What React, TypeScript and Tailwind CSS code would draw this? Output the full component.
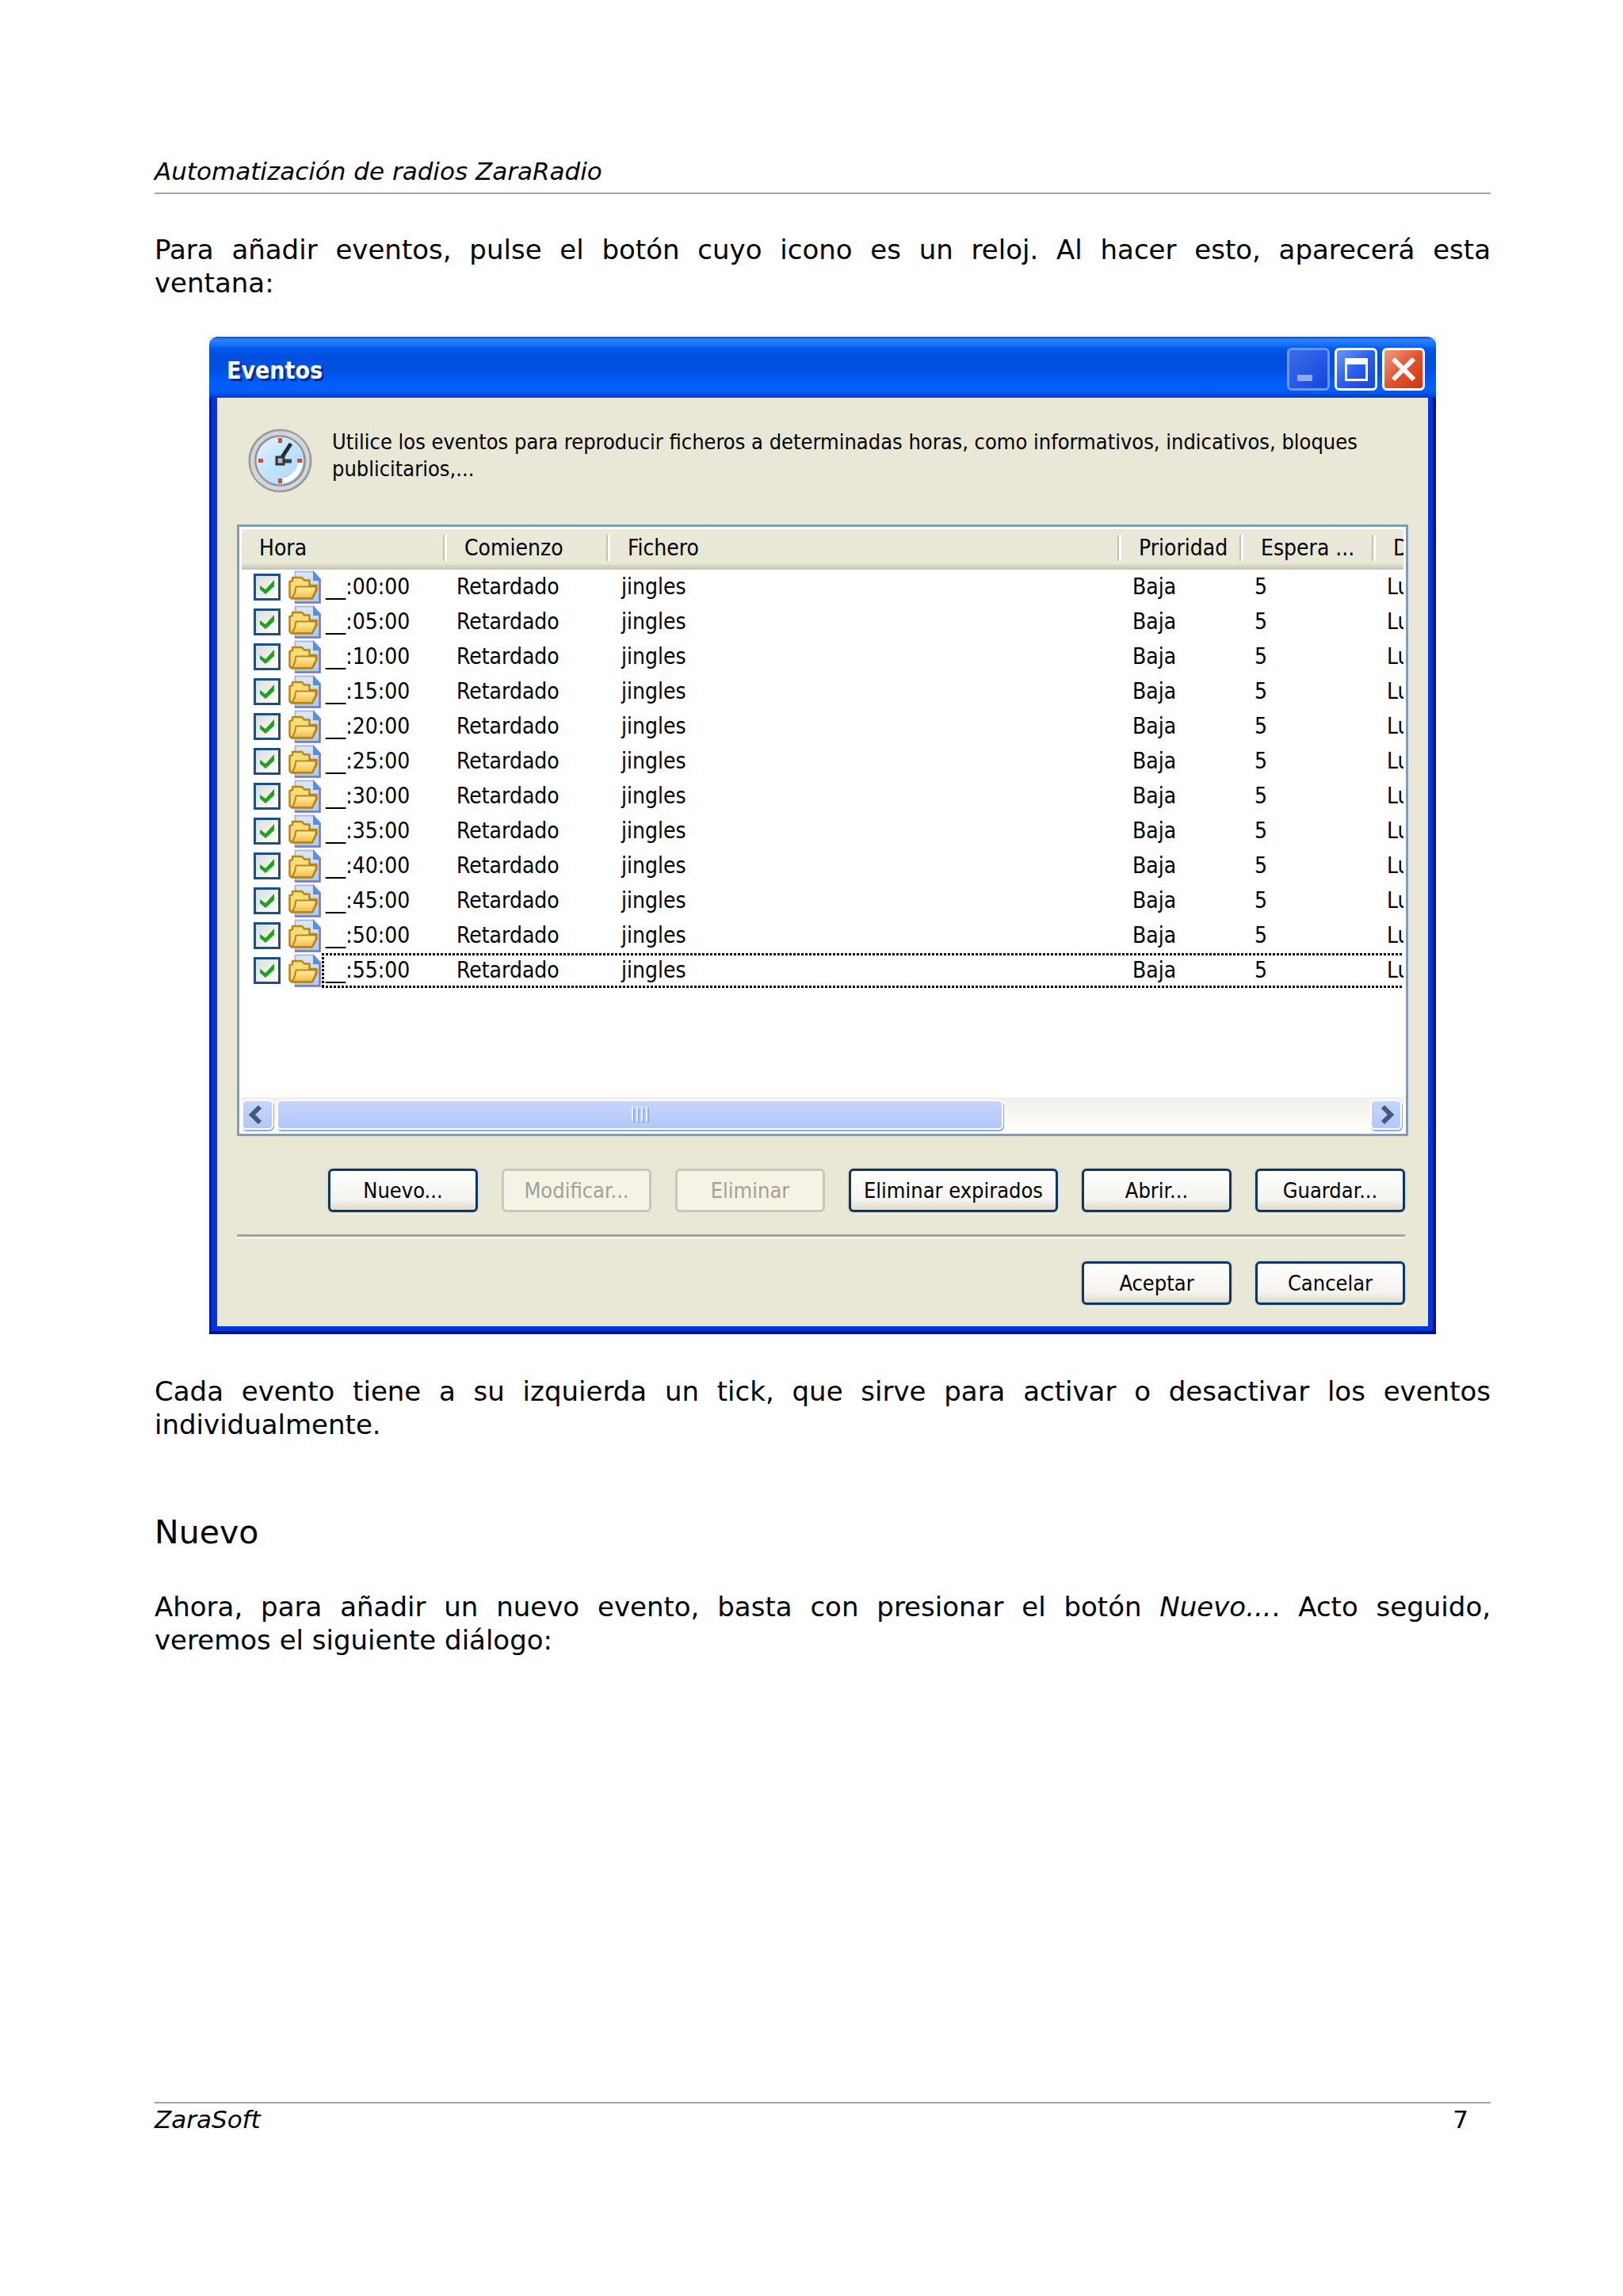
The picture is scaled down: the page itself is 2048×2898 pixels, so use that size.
import type { ReactNode } from 'react';

const events = ['00', '05', '10', '15', '20', '25', '30', '35', '40', '45', '50', '55'];

const ClockIcon = () => (
  <svg viewBox="0 0 81 81" className="h-[81px] w-[81px] shrink-0" aria-hidden="true">
    <defs>
      <linearGradient id="rim" x1="0" y1="0" x2="1" y2="1">
        <stop offset="0" stopColor="#8f8f92" />
        <stop offset="0.45" stopColor="#d9d9dc" />
        <stop offset="1" stopColor="#8c8c8e" />
      </linearGradient>
      <linearGradient id="face" x1="0" y1="0" x2="1" y2="1">
        <stop offset="0" stopColor="#e9f5fe" />
        <stop offset="0.5" stopColor="#bfe2fb" />
        <stop offset="1" stopColor="#a9d8fa" />
      </linearGradient>
    </defs>
    <circle cx="40.5" cy="40.5" r="39" fill="url(#rim)" stroke="#98979a" strokeWidth="2" />
    <circle cx="40.5" cy="40.5" r="35" fill="none" stroke="#d6d5d9" strokeWidth="4" />
    <circle cx="40.5" cy="40.5" r="31" fill="url(#face)" stroke="#8d8d92" strokeWidth="2" />
    <path d="M66 42A26 26 0 0 1 42 66" fill="none" stroke="#fff" strokeWidth="6" strokeLinecap="round" />
    <path d="M38 12h5v6h-5zM38 63h5v6h-5zM13 38h6v5h-6zM62 38h6v5h-6z" fill="#f0401c" />
    <path d="M41 39L54 19" stroke="#262b30" strokeWidth="5" />
    <path d="M42 41h13" stroke="#3b4046" strokeWidth="5" />
    <rect x="36" y="36" width="9" height="9" fill="#b5babd" stroke="#30353a" strokeWidth="3" />
  </svg>
);

const FolderIcon = () => (
  <svg viewBox="0 0 41 42" className="h-[42px] w-[41px] shrink-0" aria-hidden="true">
    <defs>
      <linearGradient id="sheet" x1="0" y1="0" x2="0" y2="1">
        <stop offset="0" stopColor="#dfe8fb" />
        <stop offset="1" stopColor="#9dcdf3" />
      </linearGradient>
      <linearGradient id="front" x1="0" y1="0" x2="0" y2="1">
        <stop offset="0" stopColor="#fff0a6" />
        <stop offset="1" stopColor="#f1bd45" />
      </linearGradient>
    </defs>
    <path d="M8.5 1.5H31L39.5 11V40.5H8.5Z" fill="url(#sheet)" stroke="#a9b8e6" strokeWidth="2" />
    <path d="M8 40.5H39.5V12" fill="none" stroke="#7b78bd" strokeWidth="2.5" />
    <path d="M31 0L41 11V13H31Z" fill="#5b8fdc" />
    <path d="M1.500 33V14L5 13V9H17L20 12.500H26.500V19H35.500V25L30 35.500H4Z" fill="#f8dc78" stroke="#b9851a" strokeWidth="2.5" strokeLinejoin="round" />
    <path d="M9.500 20.500H34.500V25L30 35H4.500L8 28Z" fill="url(#front)" stroke="#b9851a" strokeWidth="2" strokeLinejoin="round" />
  </svg>
);

const CheckBox = ({ label }: { label: string }) => (
  <span className="grid h-[34px] w-[34px] shrink-0">
    <input
      type="checkbox"
      defaultChecked
      aria-label={label}
      className="peer col-start-1 row-start-1 h-full w-full appearance-none border-3 border-[#1c5180] bg-linear-to-br from-[#dcdcd7] to-white"
    />
    <svg viewBox="0 0 34 34" className="pointer-events-none invisible col-start-1 row-start-1 peer-checked:visible" aria-hidden="true">
      <path d="M8 15l7 5L26 8v8L15 26 8 20z" fill="#21a121" />
    </svg>
  </span>
);

const captionButton = 'flex h-[54px] w-[54px] items-center justify-center rounded-md border-3';

const TitleBar = () => (
  <div className="flex h-[77px] items-center justify-between rounded-t-[12px] bg-[linear-gradient(180deg,#0a4fd0_0%,#2a86ff_5%,#1b74fb_12%,#0058ea_20%,#004fe0_32%,#0050e2_55%,#005cf8_72%,#0060ff_88%,#0050e8_94%,#0038c4_100%)] pt-1 pr-[14px] pl-[22px]">
    <h2 className="pt-1 text-[30px] leading-[40px] font-bold text-white [text-shadow:3px_3px_0_#0a2a8c]">Eventos</h2>
    <div className="flex gap-[6px]">
      <button type="button" aria-label="Minimizar" className={`${captionButton} border-[#6d95f5] bg-linear-to-br from-[#3c6cec] to-[#0f46dc]`}>
        <svg viewBox="0 0 48 48" className="h-12 w-12" aria-hidden="true">
          <path d="M10 31h19v8H10z" fill="#94a9f4" />
        </svg>
      </button>
      <button type="button" aria-label="Maximizar" className={`${captionButton} border-white bg-linear-to-br from-[#6d93fa] via-[#2a5ef0] to-[#1545dc]`}>
        <svg viewBox="0 0 48 48" className="h-12 w-12" aria-hidden="true">
          <path d="M10 10h29v29H10zM13 18v18h23V18z" fill="#fff" fillRule="evenodd" />
        </svg>
      </button>
      <button type="button" aria-label="Cerrar" className={`${captionButton} border-white bg-linear-to-br from-[#f09a80] via-[#e2532e] to-[#cf3408]`}>
        <svg viewBox="0 0 48 48" className="h-12 w-12" aria-hidden="true">
          <path d="M11 11l26 26M37 11L11 37" stroke="#fff" strokeWidth="6" />
        </svg>
      </button>
    </div>
  </div>
);

const HeaderCell = ({ children, last = false }: { children: ReactNode; last?: boolean }) => (
  <th scope="col" className="h-[51px] overflow-hidden bg-[linear-gradient(180deg,#e9e9da_0%,#e9e7d6_84%,#dad8c8_90%,#c6c3b2_100%)] p-0 font-normal">
    <div className="flex items-center justify-between pb-1 whitespace-nowrap">
      <span className="pl-[22px]">{children}</span>
      {!last && <span className="h-[33px] w-[5px] border-r-3 border-l-2 border-l-[#c5c2b1] border-r-white" />}
    </div>
  </th>
);

const EventList = () => (
  <div className="overflow-hidden pb-[138px]">
    <table className="w-full table-fixed border-collapse text-left">
      <colgroup>
        <col className="w-[259px]" />
        <col className="w-[206px]" />
        <col />
        <col className="w-[154px]" />
        <col className="w-[167px]" />
        <col className="w-[35px]" />
      </colgroup>
      <thead>
        <tr>
          <HeaderCell>Hora</HeaderCell>
          <HeaderCell>Comienzo</HeaderCell>
          <HeaderCell>Fichero</HeaderCell>
          <HeaderCell>Prioridad</HeaderCell>
          <HeaderCell>Espera ...</HeaderCell>
          <HeaderCell last>D</HeaderCell>
        </tr>
      </thead>
      <tbody>
        {events.map((minute, index) => (
          <tr key={minute} className="relative h-11">
            <td className="p-0 pl-[15px]">
              <div className="flex items-center">
                <CheckBox label={`Activar __:${minute}:00`} />
                <span className="ml-[10px] flex">
                  <FolderIcon />
                </span>
                <span className="ml-[6px]">__:{minute}:00</span>
              </div>
              {index === events.length - 1 && (
                <div className="pointer-events-none absolute inset-y-0 right-0 left-[101px] flex flex-col justify-between">
                  <div className="h-[3px] bg-[repeating-linear-gradient(90deg,#000_0_3px,#fff_3px_5px)]" />
                  <div className="w-[3px] grow bg-[repeating-linear-gradient(180deg,#fff_0_2px,#000_2px_5px)]" />
                  <div className="h-[3px] bg-[repeating-linear-gradient(90deg,#000_0_3px,#fff_3px_5px)]" />
                </div>
              )}
            </td>
            <td className="p-0 pl-3">Retardado</td>
            <td className="p-0 pl-[14px]">jingles</td>
            <td className="p-0 pl-[14px]">Baja</td>
            <td className="p-0 pl-[14px]">5</td>
            <td className="overflow-hidden p-0 pl-[14px] whitespace-nowrap">Lu</td>
          </tr>
        ))}
      </tbody>
    </table>
  </div>
);

const scrollPiece = 'flex items-center justify-center rounded-md border-2 border-white bg-linear-to-b from-[#c6d4fd] to-[#b2c8f8] shadow-[1px_2px_0_#8fabdd]';

const ScrollBar = () => (
  <div className="flex h-11 items-center bg-linear-to-b from-[#f1efe8] to-[#fefefb] pr-[2px]">
    <button type="button" aria-label="Desplazar a la izquierda" className={`${scrollPiece} h-[38px] w-10`}>
      <svg viewBox="0 0 36 34" className="h-[34px] w-9" aria-hidden="true">
        <path d="M21 7L11 17l10 10" fill="none" stroke="#435a80" strokeWidth="6" />
      </svg>
    </button>
    <div className="flex grow px-1">
      <div className={`${scrollPiece} h-[38px] w-2/3`}>
        <svg viewBox="0 0 22 20" className="h-5 w-[22px]" aria-hidden="true">
          <path d="M1 0v18M7 0v18M13 0v18M19 0v18" stroke="#eef3ff" strokeWidth="2" />
          <path d="M3 2v18M9 2v18M15 2v18M21 2v18" stroke="#8faef0" strokeWidth="2" />
        </svg>
      </div>
    </div>
    <button type="button" aria-label="Desplazar a la derecha" className={`${scrollPiece} h-[38px] w-10`}>
      <svg viewBox="0 0 36 34" className="h-[34px] w-9" aria-hidden="true">
        <path d="M14 7l10 10-10 10" fill="none" stroke="#435a80" strokeWidth="6" />
      </svg>
    </button>
  </div>
);

const DialogButton = ({ children, wide = false, disabled = false }: { children: ReactNode; wide?: boolean; disabled?: boolean }) => (
  <button
    type="button"
    disabled={disabled}
    className={`h-[55px] rounded-md border-3 text-[27px] whitespace-nowrap ${wide ? 'w-[264px]' : 'w-[189px]'} ${
      disabled
        ? 'border-[#c9c7ba] bg-[#f5f3e6] text-[#a3a195]'
        : 'border-[#0b3768] bg-[linear-gradient(180deg,#fff_0%,#f4f3ee_75%,#dddbcb_100%)] shadow-[0_0_0_2px_#e0decd,2px_3px_0_#f6f5ec]'
    }`}
  >
    {children}
  </button>
);

const EventsDialog = () => (
  <section className="bg-[#e9e7d6] font-['DejaVu_Sans_Condensed','DejaVu_Sans',sans-serif] text-[28px] leading-[34px]">
    <div className="rounded-t-[12px] bg-[#0036dc] shadow-[inset_-4px_-4px_0_#0012a0,inset_3px_0_0_#0018c0]">
      <TitleBar />
      <div className="px-[10px] pb-[10px]">
        <div className="bg-[#e9e7d6] px-[25px] pt-[39px] pb-[27px]">
          <div className="flex gap-[25px] pl-[14px]">
            <ClockIcon />
            <p className="text-[27px]">
              Utilice los eventos para reproducir ficheros a determinadas horas, como informativos, indicativos, bloques
              <br />
              publicitarios,...
            </p>
          </div>
          <div className="mt-10 border-3 border-[#7f9db9] bg-white p-[3px] pb-[2px]">
            <EventList />
            <ScrollBar />
          </div>
          <div className="mt-[41px] flex justify-end gap-[30px] pr-1">
            <DialogButton>Nuevo...</DialogButton>
            <DialogButton disabled>Modificar...</DialogButton>
            <DialogButton disabled>Eliminar</DialogButton>
            <DialogButton wide>Eliminar expirados</DialogButton>
            <DialogButton>Abrir...</DialogButton>
            <DialogButton>Guardar...</DialogButton>
          </div>
          <div className="mt-7 mr-1 h-[5px] border-t-3 border-b-2 border-t-[#a5a394] border-b-white" />
          <div className="mt-[29px] flex justify-end gap-[30px] pr-1">
            <DialogButton>Aceptar</DialogButton>
            <DialogButton>Cancelar</DialogButton>
          </div>
        </div>
      </div>
    </div>
  </section>
);

const App = () => {
  return (
    <div className="flex min-h-screen flex-col bg-white pt-[196px] pr-[167px] pb-[203px] pl-[195px] font-['DejaVu_Sans',sans-serif] text-[34px] leading-[42px] text-black">
      <header className="border-b-2 border-[#a3a3a3] pb-[7px] text-[31px] leading-[40px] italic">
        Automatización de radios ZaraRadio
      </header>

      <main>
        <p className="mt-[49px]">
          <span className="block text-justify [text-align-last:justify]">
            Para añadir eventos, pulse el botón cuyo icono es un reloj. Al hacer esto, aparecerá esta
          </span>
          ventana:
        </p>
        <div className="mt-[47px] px-[69px]">
          <EventsDialog />
        </div>
        <p className="mt-[51px] text-justify">
          Cada evento tiene a su izquierda un tick, que sirve para activar o desactivar los eventos individualmente.
        </p>

        <h1 className="mt-[90px] text-[41px] leading-[50px]">Nuevo</h1>
        <p className="mt-12 text-justify">
          Ahora, para añadir un nuevo evento, basta con presionar el botón <em>Nuevo...</em>. Acto seguido, veremos el siguiente diálogo:
        </p>
      </main>

      <footer className="mt-auto flex justify-between border-t-2 border-[#a3a3a3] pr-7 text-[31px] leading-[40px]">
        <span className="italic">ZaraSoft</span>
        <span>7</span>
      </footer>
    </div>
  );
};

export default App;
